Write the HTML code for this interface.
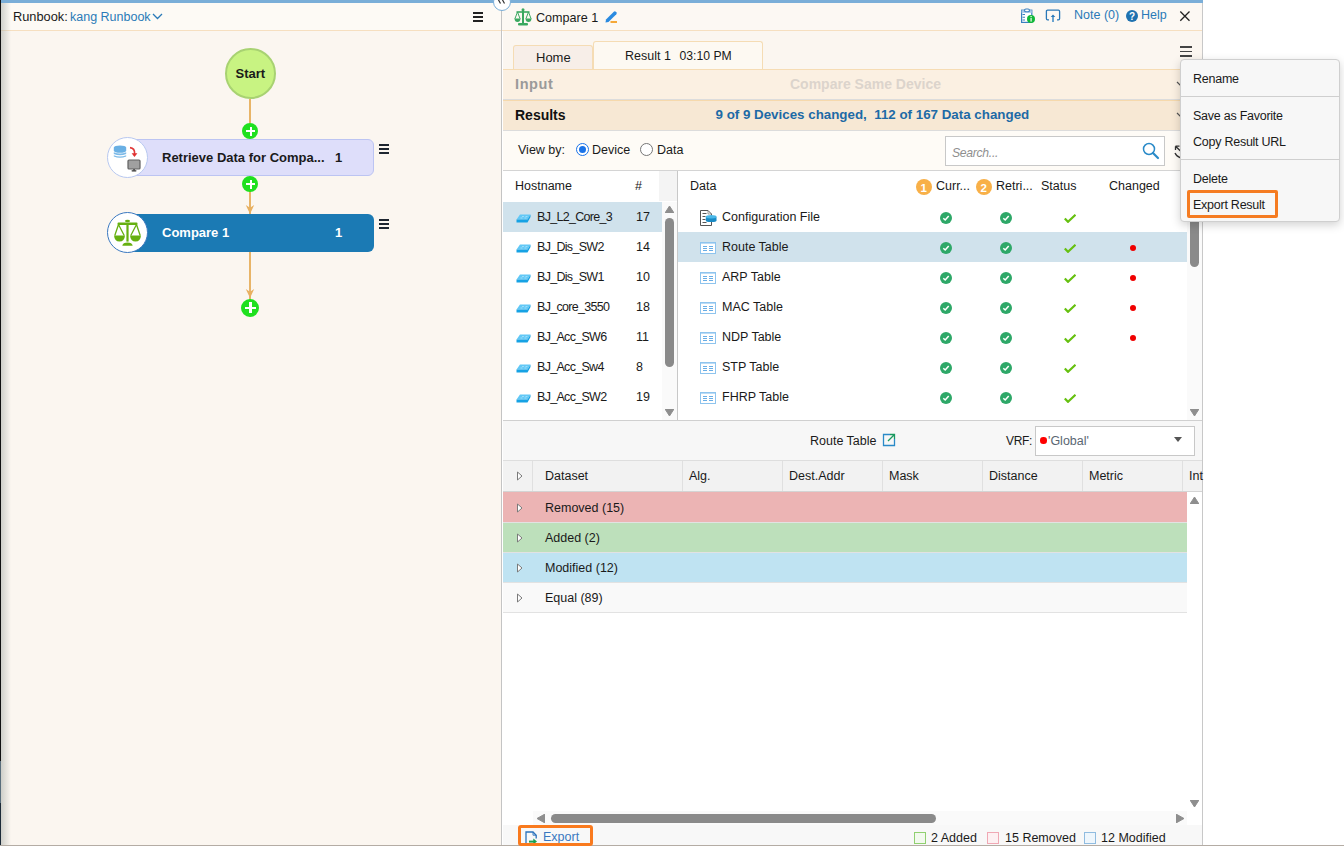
<!DOCTYPE html>
<html><head><meta charset="utf-8">
<style>
*{margin:0;padding:0;box-sizing:border-box}
html,body{width:1344px;height:846px;overflow:hidden;background:#fff}
body{position:relative;font-family:"Liberation Sans",sans-serif;font-size:12.5px;color:#1a1a1a}
.a{position:absolute}
.t{position:absolute;white-space:pre;line-height:1}
.b{font-weight:bold}
</style></head><body>

<!-- LEFT PANEL -->
<div class="a" style="left:0;top:0;width:501px;height:846px;background:#fbf6f0"></div>
<div class="a" style="left:0;top:3px;width:501px;height:27px;background:#fdfaf5"></div>
<div class="a" style="left:0;top:30px;width:501px;height:1px;background:#f6dfc0"></div>
<div class="a" style="left:1px;top:0;width:10px;height:846px;background:linear-gradient(to right,rgba(170,175,170,.55),rgba(250,246,240,0))"></div>
<div class="a" style="left:0;top:0;width:1px;height:846px;background:#111"></div>
<div class="a" style="left:0;top:761px;width:1px;height:42px;background:#5a6e7c"></div><div class="a" style="left:0;top:803px;width:1px;height:43px;background:#1c2a38"></div>
<div class="a" style="left:1px;top:0;width:1202px;height:3px;background:#7aaed8"></div>


<div class="t" style="left:13px;top:11px;font-size:12.8px">Runbook:</div><div class="t" style="left:70px;top:11px;color:#2a7ab8">kang Runbook</div>
<svg class="a" style="left:152px;top:13px" width="11" height="7" viewBox="0 0 11 7"><path d="M1 1 L5.5 5.5 L10 1" fill="none" stroke="#2a7ab8" stroke-width="1.3"/></svg>
<div class="a" style="left:473px;top:12px;width:10px;height:2px;background:#222"></div>
<div class="a" style="left:473px;top:16px;width:10px;height:2px;background:#222"></div>
<div class="a" style="left:473px;top:20px;width:10px;height:2px;background:#222"></div>

<!-- flow -->
<div class="a" style="left:249px;top:99px;width:2px;height:24px;background:#e8b468"></div>
<div class="a" style="left:249px;top:190px;width:2px;height:24px;background:#e8b468"></div>
<div class="a" style="left:249px;top:252px;width:2px;height:48px;background:#e8b468"></div>
<div class="a" style="left:225px;top:48px;width:51px;height:51px;border-radius:50%;background:#c8f382;border:2px solid #a8d272"></div>
<div class="t b" style="left:235.5px;top:67px;font-size:13px">Start</div>

<!-- retrieve node -->
<div class="a" style="left:120px;top:139px;width:254px;height:37px;background:#dedefa;border:1px solid #bcc4f2;border-radius:6px"></div>
<div class="a" style="left:107px;top:137px;width:41px;height:41px;border-radius:50%;background:#fff;border:1px solid #b8c8f0"></div>
<div class="t b" style="left:162px;top:151px;font-size:13px">Retrieve Data for Compa...</div>
<div class="t b" style="left:335px;top:151px;font-size:13px">1</div>
<div class="a" style="left:379px;top:144px;width:10px;height:2px;background:#1e2630"></div>
<div class="a" style="left:379px;top:148px;width:10px;height:2px;background:#1e2630"></div>
<div class="a" style="left:379px;top:152px;width:10px;height:2px;background:#1e2630"></div>

<!-- compare node -->
<div class="a" style="left:120px;top:214px;width:254px;height:38px;background:#1b7ab4;border-radius:6px"></div>
<div class="a" style="left:107px;top:212px;width:41px;height:41px;border-radius:50%;background:#fff;border:1px solid #3a78c0"></div>
<div class="t b" style="left:162px;top:226px;font-size:13px;color:#fff">Compare 1</div>
<div class="t b" style="left:335px;top:226px;font-size:13px;color:#fff">1</div>
<div class="a" style="left:379px;top:219px;width:10px;height:2px;background:#1e2630"></div>
<div class="a" style="left:379px;top:223px;width:10px;height:2px;background:#1e2630"></div>
<div class="a" style="left:379px;top:227px;width:10px;height:2px;background:#1e2630"></div>

<!-- plus circles -->
<div class="a" style="left:242px;top:123px;width:16px;height:16px;border-radius:50%;background:#1fe01f"></div>
<div class="a" style="left:242px;top:176px;width:16px;height:16px;border-radius:50%;background:#1fe01f"></div>
<div class="a" style="left:241px;top:299px;width:18px;height:18px;border-radius:50%;background:#1fe01f"></div>

<!-- DIVIDER -->
<div class="a" style="left:501px;top:3px;width:1px;height:843px;background:#c4c4c4"></div>

<!-- RIGHT PANEL -->
<div class="a" style="left:502px;top:3px;width:700px;height:27px;background:#fcf8f3"></div>
<div class="a" style="left:502px;top:30px;width:700px;height:1px;background:#f6dfc0"></div>
<div class="a" style="left:502px;top:31px;width:700px;height:38px;background:#fbf6f0"></div>
<div class="a" style="left:502px;top:69px;width:700px;height:1px;background:#f6dcb4"></div>
<div class="a" style="left:502px;top:70px;width:700px;height:29px;background:#fbf0e2"></div>
<div class="a" style="left:502px;top:99px;width:700px;height:1px;background:#dcdcdc"></div>
<div class="a" style="left:502px;top:100px;width:700px;height:30px;background:#f7e8d4"></div>
<div class="a" style="left:502px;top:100px;width:700px;height:1px;background:#f6d9ac"></div>
<div class="a" style="left:502px;top:130px;width:700px;height:1px;background:#dcdcdc"></div>
<div class="a" style="left:502px;top:131px;width:700px;height:39px;background:#fefbf6"></div>
<div class="a" style="left:502px;top:170px;width:700px;height:1px;background:#d4d4d4"></div>
<div class="a" style="left:502px;top:171px;width:700px;height:249px;background:#fff"></div>
<div class="a" style="left:502px;top:420px;width:700px;height:1px;background:#d0d0d0"></div>
<div class="a" style="left:502px;top:421px;width:700px;height:39px;background:#f7f7f7"></div>
<div class="a" style="left:502px;top:460px;width:700px;height:1px;background:#dedede"></div>
<div class="a" style="left:502px;top:461px;width:700px;height:30px;background:#f2f2f2"></div>
<div class="a" style="left:502px;top:491px;width:700px;height:1px;background:#d8d8d8"></div>
<div class="a" style="left:502px;top:492px;width:700px;height:333px;background:#fff"></div>
<div class="a" style="left:502px;top:825px;width:700px;height:20px;background:#f8f8f8"></div>
<div class="a" style="left:1202px;top:3px;width:1px;height:843px;background:#c8c8c8"></div>


<!-- right header content -->
<svg class="a" style="left:514px;top:8px" width="18" height="18" viewBox="0 0 18 18">
<g fill="#3aa860"><rect x="8" y="2" width="2" height="13"/><circle cx="9" cy="1.8" r="1.5"/><rect x="2.5" y="3.2" width="13" height="1.6"/><rect x="4" y="15" width="10" height="2.5" rx="1"/>
<path d="M.5 10.5 H6.5 Q6.3 14 3.5 14 Q.7 14 .5 10.5 Z"/><path d="M11.5 10.5 H17.5 Q17.3 14 14.5 14 Q11.7 14 11.5 10.5 Z"/></g>
<path d="M3.5 4 L.9 10.8 M3.5 4 L6.1 10.8 M14.5 4 L11.9 10.8 M14.5 4 L17.1 10.8" stroke="#3aa860" stroke-width="1" fill="none"/></svg>
<div class="t" style="left:536px;top:11.7px;font-size:12.6px">Compare 1</div>
<svg class="a" style="left:604px;top:10px" width="14" height="14" viewBox="0 0 14 14"><path d="M1.5 12.5 L2 9.5 L9.8 1.7 Q10.8 .8 11.8 1.7 L12.3 2.2 Q13.2 3.2 12.3 4.2 L4.5 12 Z" fill="#2a8ae0"/><rect x="6.5" y="11" width="6.5" height="2" fill="#f5a838"/></svg>

<svg class="a" style="left:1020px;top:8px" width="16" height="16" viewBox="0 0 16 16"><rect x="1.6" y="2.2" width="10.2" height="12.2" fill="#fff" stroke="#3a80c0" stroke-width="1.2"/><rect x="1.6" y="2.2" width="10.2" height="2.6" fill="#a8c8e8"/><rect x="4.6" y="1" width="4.8" height="2.8" rx="1.3" fill="#fff" stroke="#3a80c0" stroke-width="1.1"/><path d="M2.5 6.5h2.5M2.5 9.3h2.5M2.5 12h2.5" stroke="#3a80c0" stroke-width="1.1"/><circle cx="11" cy="11" r="4" fill="#10b838"/><rect x="10.4" y="10" width="1.4" height="3.6" fill="#d8f0d8"/><rect x="10.4" y="8" width="1.4" height="1.2" fill="#d8f0d8"/></svg><svg class="a" style="left:1045px;top:9px" width="16" height="14" viewBox="0 0 16 14"><path d="M4 10.8 H2.6 Q1.4 10.8 1.4 9.6 V2.4 Q1.4 1.2 2.6 1.2 H13.4 Q14.6 1.2 14.6 2.4 V9.6 Q14.6 10.8 13.4 10.8 H12" fill="none" stroke="#2a78b8" stroke-width="1.3"/><path d="M8 13 V6.5" stroke="#3a88c4" stroke-width="1.5"/><path d="M5.7 8 L8 5.5 L10.3 8 Z" fill="#2a78b8"/></svg>
<div class="t" style="left:1074px;top:9px;color:#2a7ab8;font-size:12.5px">Note (0)</div>
<div class="a" style="left:1126px;top:10px;width:12px;height:12px;border-radius:50%;background:#1f72b0"></div>
<div class="t b" style="left:1129px;top:11.5px;color:#fff;font-size:10px">?</div>
<div class="t" style="left:1141px;top:9px;color:#2a7ab8;font-size:12.5px">Help</div>
<svg class="a" style="left:1179px;top:10px" width="12" height="12" viewBox="0 0 12 12"><path d="M1.3 1.5 L10.5 10.7 M10.5 1.5 L1.3 10.7" stroke="#222" stroke-width="1.3"/></svg>

<!-- tabs -->
<div class="a" style="left:513px;top:45px;width:80px;height:24px;background:#f7eee8;border:1px solid #f5dcb4;border-bottom:none;border-radius:3px 3px 0 0"></div>
<div class="t" style="left:536px;top:51px;font-size:13px">Home</div>
<div class="a" style="left:593px;top:41px;width:170px;height:28px;background:#fdf9f2;border:1px solid #f5dcb4;border-bottom:none;border-radius:3px 3px 0 0"></div>
<div class="t" style="left:625px;top:50px">Result 1</div><div class="t" style="left:679.5px;top:50px;font-size:12.2px">03:10 PM</div>
<div class="a" style="left:1180px;top:46px;width:12px;height:1.5px;background:#444"></div>
<div class="a" style="left:1180px;top:50.5px;width:12px;height:1.5px;background:#444"></div>
<div class="a" style="left:1180px;top:55px;width:12px;height:1.5px;background:#444"></div>

<!-- input / results rows -->
<div class="t b" style="left:515px;top:77px;font-size:14.5px;letter-spacing:.6px;color:#9a9a9a">Input</div>
<div class="t b" style="left:790px;top:77px;font-size:14px;color:#dcd4cc">Compare Same Device</div>
<div class="t b" style="left:515px;top:108px;font-size:14px;color:#111">Results</div>
<div class="t b" style="left:715.5px;top:108.3px;font-size:13.35px;color:#1d6aa6">9 of 9 Devices changed,  112 of 167 Data changed</div>

<!-- view by -->
<div class="t" style="left:518px;top:144px">View by:</div>
<div class="a" style="left:576px;top:143px;width:13px;height:13px;border-radius:50%;border:1px solid #1a73e8;background:#fff"></div>
<div class="a" style="left:579px;top:146px;width:7px;height:7px;border-radius:50%;background:#1a73e8"></div>
<div class="t" style="left:592px;top:144px">Device</div>
<div class="a" style="left:640px;top:143px;width:13px;height:13px;border-radius:50%;border:1px solid #767676;background:#fff"></div>
<div class="t" style="left:657px;top:144px">Data</div>
<div class="a" style="left:945px;top:136px;width:220px;height:30px;background:#fff;border:1px solid #c8c8c8"></div>
<div class="t" style="left:952px;top:146.5px;color:#8f8f8f;font-style:italic;font-size:12.2px;letter-spacing:-.3px">Search...</div>
<svg class="a" style="left:1142px;top:142px" width="18" height="18" viewBox="0 0 18 18"><circle cx="7" cy="7" r="5.5" fill="none" stroke="#2a8ac8" stroke-width="1.5"/><path d="M11 11 L16 16" stroke="#2a8ac8" stroke-width="2.2" stroke-linecap="round"/></svg>

<div class="a" style="left:659px;top:171px;width:18px;height:30px;background:#f4f4f4"></div>
<div class="a" style="left:662px;top:202px;width:15px;height:218px;background:#fafafa"></div>
<div class="a" style="left:677px;top:171px;width:1px;height:249px;background:#c8c8c8"></div>
<div class="t" style="left:515px;top:180.3px">Hostname</div>
<div class="t" style="left:635px;top:180.3px">#</div>
<div class="a" style="left:503px;top:202px;width:159px;height:30px;background:#d0e2ec"></div>
<svg class="a" style="left:515.5px;top:213.5px" width="15" height="10" viewBox="0 0 15 10"><path d="M4 .5 H14.5 L11.5 5.5 H.5 Z" fill="#62c8f6"/><path d="M.5 5.5 H11.5 L14.5 .5 V3 L11.5 8.5 H.5 Z" fill="#16a2e4"/><path d="M6 2.5 h2 M9.5 2.5 h2 M4.5 4 h2 M8.5 4 h2" stroke="#a8e2fb" stroke-width=".8"/></svg>
<div class="t" style="left:537px;top:211px;letter-spacing:-.7px">BJ_L2_Core_3</div>
<div class="t" style="left:636px;top:211px">17</div>
<svg class="a" style="left:515.5px;top:243.5px" width="15" height="10" viewBox="0 0 15 10"><path d="M4 .5 H14.5 L11.5 5.5 H.5 Z" fill="#62c8f6"/><path d="M.5 5.5 H11.5 L14.5 .5 V3 L11.5 8.5 H.5 Z" fill="#16a2e4"/><path d="M6 2.5 h2 M9.5 2.5 h2 M4.5 4 h2 M8.5 4 h2" stroke="#a8e2fb" stroke-width=".8"/></svg>
<div class="t" style="left:537px;top:241px;letter-spacing:-.7px">BJ_Dis_SW2</div>
<div class="t" style="left:636px;top:241px">14</div>
<svg class="a" style="left:515.5px;top:273.5px" width="15" height="10" viewBox="0 0 15 10"><path d="M4 .5 H14.5 L11.5 5.5 H.5 Z" fill="#62c8f6"/><path d="M.5 5.5 H11.5 L14.5 .5 V3 L11.5 8.5 H.5 Z" fill="#16a2e4"/><path d="M6 2.5 h2 M9.5 2.5 h2 M4.5 4 h2 M8.5 4 h2" stroke="#a8e2fb" stroke-width=".8"/></svg>
<div class="t" style="left:537px;top:271px;letter-spacing:-.7px">BJ_Dis_SW1</div>
<div class="t" style="left:636px;top:271px">10</div>
<svg class="a" style="left:515.5px;top:303.5px" width="15" height="10" viewBox="0 0 15 10"><path d="M4 .5 H14.5 L11.5 5.5 H.5 Z" fill="#62c8f6"/><path d="M.5 5.5 H11.5 L14.5 .5 V3 L11.5 8.5 H.5 Z" fill="#16a2e4"/><path d="M6 2.5 h2 M9.5 2.5 h2 M4.5 4 h2 M8.5 4 h2" stroke="#a8e2fb" stroke-width=".8"/></svg>
<div class="t" style="left:537px;top:301px;letter-spacing:-.7px">BJ_core_3550</div>
<div class="t" style="left:636px;top:301px">18</div>
<svg class="a" style="left:515.5px;top:333.5px" width="15" height="10" viewBox="0 0 15 10"><path d="M4 .5 H14.5 L11.5 5.5 H.5 Z" fill="#62c8f6"/><path d="M.5 5.5 H11.5 L14.5 .5 V3 L11.5 8.5 H.5 Z" fill="#16a2e4"/><path d="M6 2.5 h2 M9.5 2.5 h2 M4.5 4 h2 M8.5 4 h2" stroke="#a8e2fb" stroke-width=".8"/></svg>
<div class="t" style="left:537px;top:331px;letter-spacing:-.7px">BJ_Acc_SW6</div>
<div class="t" style="left:636px;top:331px">11</div>
<svg class="a" style="left:515.5px;top:363.5px" width="15" height="10" viewBox="0 0 15 10"><path d="M4 .5 H14.5 L11.5 5.5 H.5 Z" fill="#62c8f6"/><path d="M.5 5.5 H11.5 L14.5 .5 V3 L11.5 8.5 H.5 Z" fill="#16a2e4"/><path d="M6 2.5 h2 M9.5 2.5 h2 M4.5 4 h2 M8.5 4 h2" stroke="#a8e2fb" stroke-width=".8"/></svg>
<div class="t" style="left:537px;top:361px;letter-spacing:-.7px">BJ_Acc_Sw4</div>
<div class="t" style="left:636px;top:361px">8</div>
<svg class="a" style="left:515.5px;top:393.5px" width="15" height="10" viewBox="0 0 15 10"><path d="M4 .5 H14.5 L11.5 5.5 H.5 Z" fill="#62c8f6"/><path d="M.5 5.5 H11.5 L14.5 .5 V3 L11.5 8.5 H.5 Z" fill="#16a2e4"/><path d="M6 2.5 h2 M9.5 2.5 h2 M4.5 4 h2 M8.5 4 h2" stroke="#a8e2fb" stroke-width=".8"/></svg>
<div class="t" style="left:537px;top:391px;letter-spacing:-.7px">BJ_Acc_SW2</div>
<div class="t" style="left:636px;top:391px">19</div>
<svg class="a" style="left:665px;top:206px" width="9" height="7" viewBox="0 0 9 7"><path d="M4.5 0 L9 7 H0 Z" fill="#8e8e8e" stroke="#8e8e8e" stroke-width="1" stroke-linejoin="round"/></svg>
<div class="a" style="left:665px;top:218px;width:9px;height:149px;background:#8a8a8a;border-radius:4.5px"></div>
<svg class="a" style="left:665px;top:409px" width="9" height="7" viewBox="0 0 9 7"><path d="M0 0 H9 L4.5 7 Z" fill="#8e8e8e" stroke="#8e8e8e" stroke-width="1" stroke-linejoin="round"/></svg>
<div class="t" style="left:690px;top:180.3px">Data</div>
<div class="a" style="left:916px;top:179px;width:16px;height:16px;border-radius:50%;background:#f8b048"></div>
<div class="t b" style="left:920.5px;top:182.5px;color:#fff;font-size:11.5px">1</div>
<div class="t" style="left:936px;top:180.3px">Curr...</div>
<div class="a" style="left:976px;top:179px;width:16px;height:16px;border-radius:50%;background:#f8b048"></div>
<div class="t b" style="left:980.5px;top:182.5px;color:#fff;font-size:11.5px">2</div>
<div class="t" style="left:996px;top:180.3px">Retri...</div>
<div class="t" style="left:1041px;top:180.3px">Status</div>
<div class="t" style="left:1109px;top:180.3px">Changed</div>
<svg class="a" style="left:700px;top:210px" width="17" height="17" viewBox="0 0 17 17"><path d="M.5 .5 H8 L11.5 4 V15.5 H.5 Z" fill="#fff" stroke="#555" stroke-width="1"/><path d="M8 .5 V4 H11.5" fill="none" stroke="#777" stroke-width=".7"/><path d="M2.5 3.5h4M2.5 6.5h3M2.5 9.5h3M2.5 12.5h4" stroke="#555" stroke-width="1"/><rect x="5.8" y="6.8" width="10.7" height="3.6" fill="#1a90cc"/><ellipse cx="11.15" cy="10.4" rx="5.35" ry="1.7" fill="#1a8ac4"/><ellipse cx="11.15" cy="6.8" rx="5.35" ry="1.7" fill="#4ab8e8"/></svg>
<div class="t" style="left:722px;top:211px">Configuration File</div>
<svg class="a" style="left:940px;top:212px" width="12" height="12" viewBox="0 0 12 12"><circle cx="6" cy="6" r="6" fill="#2ea868"/><path d="M3.3 6.2 L5.2 8 L8.7 4" fill="none" stroke="#fff" stroke-width="1.5"/></svg>
<svg class="a" style="left:1000px;top:212px" width="12" height="12" viewBox="0 0 12 12"><circle cx="6" cy="6" r="6" fill="#2ea868"/><path d="M3.3 6.2 L5.2 8 L8.7 4" fill="none" stroke="#fff" stroke-width="1.5"/></svg>
<svg class="a" style="left:1064px;top:214px" width="12" height="9" viewBox="0 0 12 9"><path d="M0.8 4.5 L4 7.8 L11.5 0.8" fill="none" stroke="#66c010" stroke-width="2.2"/></svg>
<div class="a" style="left:678px;top:232px;width:509px;height:30px;background:#d0e2ec"></div>
<svg class="a" style="left:700px;top:242px" width="16" height="12" viewBox="0 0 16 12"><rect x=".5" y=".5" width="15" height="11" fill="#fff" stroke="#8ec4ee"/><rect x="0" y="0" width="16" height="1.6" fill="#8ec4ee"/><path d="M3 4.5h4M3 6.5h4M3 8.5h4M9 4.5h4M9 6.5h4M9 8.5h4" stroke="#6aaee6" stroke-width="1"/></svg>
<div class="t" style="left:722px;top:241px">Route Table</div>
<svg class="a" style="left:940px;top:242px" width="12" height="12" viewBox="0 0 12 12"><circle cx="6" cy="6" r="6" fill="#2ea868"/><path d="M3.3 6.2 L5.2 8 L8.7 4" fill="none" stroke="#fff" stroke-width="1.5"/></svg>
<svg class="a" style="left:1000px;top:242px" width="12" height="12" viewBox="0 0 12 12"><circle cx="6" cy="6" r="6" fill="#2ea868"/><path d="M3.3 6.2 L5.2 8 L8.7 4" fill="none" stroke="#fff" stroke-width="1.5"/></svg>
<svg class="a" style="left:1064px;top:244px" width="12" height="9" viewBox="0 0 12 9"><path d="M0.8 4.5 L4 7.8 L11.5 0.8" fill="none" stroke="#66c010" stroke-width="2.2"/></svg>
<div class="a" style="left:1130px;top:245px;width:6px;height:6px;border-radius:50%;background:#f00000"></div>
<svg class="a" style="left:700px;top:272px" width="16" height="12" viewBox="0 0 16 12"><rect x=".5" y=".5" width="15" height="11" fill="#fff" stroke="#8ec4ee"/><rect x="0" y="0" width="16" height="1.6" fill="#8ec4ee"/><path d="M3 4.5h4M3 6.5h4M3 8.5h4M9 4.5h4M9 6.5h4M9 8.5h4" stroke="#6aaee6" stroke-width="1"/></svg>
<div class="t" style="left:722px;top:271px">ARP Table</div>
<svg class="a" style="left:940px;top:272px" width="12" height="12" viewBox="0 0 12 12"><circle cx="6" cy="6" r="6" fill="#2ea868"/><path d="M3.3 6.2 L5.2 8 L8.7 4" fill="none" stroke="#fff" stroke-width="1.5"/></svg>
<svg class="a" style="left:1000px;top:272px" width="12" height="12" viewBox="0 0 12 12"><circle cx="6" cy="6" r="6" fill="#2ea868"/><path d="M3.3 6.2 L5.2 8 L8.7 4" fill="none" stroke="#fff" stroke-width="1.5"/></svg>
<svg class="a" style="left:1064px;top:274px" width="12" height="9" viewBox="0 0 12 9"><path d="M0.8 4.5 L4 7.8 L11.5 0.8" fill="none" stroke="#66c010" stroke-width="2.2"/></svg>
<div class="a" style="left:1130px;top:275px;width:6px;height:6px;border-radius:50%;background:#f00000"></div>
<svg class="a" style="left:700px;top:302px" width="16" height="12" viewBox="0 0 16 12"><rect x=".5" y=".5" width="15" height="11" fill="#fff" stroke="#8ec4ee"/><rect x="0" y="0" width="16" height="1.6" fill="#8ec4ee"/><path d="M3 4.5h4M3 6.5h4M3 8.5h4M9 4.5h4M9 6.5h4M9 8.5h4" stroke="#6aaee6" stroke-width="1"/></svg>
<div class="t" style="left:722px;top:301px">MAC Table</div>
<svg class="a" style="left:940px;top:302px" width="12" height="12" viewBox="0 0 12 12"><circle cx="6" cy="6" r="6" fill="#2ea868"/><path d="M3.3 6.2 L5.2 8 L8.7 4" fill="none" stroke="#fff" stroke-width="1.5"/></svg>
<svg class="a" style="left:1000px;top:302px" width="12" height="12" viewBox="0 0 12 12"><circle cx="6" cy="6" r="6" fill="#2ea868"/><path d="M3.3 6.2 L5.2 8 L8.7 4" fill="none" stroke="#fff" stroke-width="1.5"/></svg>
<svg class="a" style="left:1064px;top:304px" width="12" height="9" viewBox="0 0 12 9"><path d="M0.8 4.5 L4 7.8 L11.5 0.8" fill="none" stroke="#66c010" stroke-width="2.2"/></svg>
<div class="a" style="left:1130px;top:305px;width:6px;height:6px;border-radius:50%;background:#f00000"></div>
<svg class="a" style="left:700px;top:332px" width="16" height="12" viewBox="0 0 16 12"><rect x=".5" y=".5" width="15" height="11" fill="#fff" stroke="#8ec4ee"/><rect x="0" y="0" width="16" height="1.6" fill="#8ec4ee"/><path d="M3 4.5h4M3 6.5h4M3 8.5h4M9 4.5h4M9 6.5h4M9 8.5h4" stroke="#6aaee6" stroke-width="1"/></svg>
<div class="t" style="left:722px;top:331px">NDP Table</div>
<svg class="a" style="left:940px;top:332px" width="12" height="12" viewBox="0 0 12 12"><circle cx="6" cy="6" r="6" fill="#2ea868"/><path d="M3.3 6.2 L5.2 8 L8.7 4" fill="none" stroke="#fff" stroke-width="1.5"/></svg>
<svg class="a" style="left:1000px;top:332px" width="12" height="12" viewBox="0 0 12 12"><circle cx="6" cy="6" r="6" fill="#2ea868"/><path d="M3.3 6.2 L5.2 8 L8.7 4" fill="none" stroke="#fff" stroke-width="1.5"/></svg>
<svg class="a" style="left:1064px;top:334px" width="12" height="9" viewBox="0 0 12 9"><path d="M0.8 4.5 L4 7.8 L11.5 0.8" fill="none" stroke="#66c010" stroke-width="2.2"/></svg>
<div class="a" style="left:1130px;top:335px;width:6px;height:6px;border-radius:50%;background:#f00000"></div>
<svg class="a" style="left:700px;top:362px" width="16" height="12" viewBox="0 0 16 12"><rect x=".5" y=".5" width="15" height="11" fill="#fff" stroke="#8ec4ee"/><rect x="0" y="0" width="16" height="1.6" fill="#8ec4ee"/><path d="M3 4.5h4M3 6.5h4M3 8.5h4M9 4.5h4M9 6.5h4M9 8.5h4" stroke="#6aaee6" stroke-width="1"/></svg>
<div class="t" style="left:722px;top:361px">STP Table</div>
<svg class="a" style="left:940px;top:362px" width="12" height="12" viewBox="0 0 12 12"><circle cx="6" cy="6" r="6" fill="#2ea868"/><path d="M3.3 6.2 L5.2 8 L8.7 4" fill="none" stroke="#fff" stroke-width="1.5"/></svg>
<svg class="a" style="left:1000px;top:362px" width="12" height="12" viewBox="0 0 12 12"><circle cx="6" cy="6" r="6" fill="#2ea868"/><path d="M3.3 6.2 L5.2 8 L8.7 4" fill="none" stroke="#fff" stroke-width="1.5"/></svg>
<svg class="a" style="left:1064px;top:364px" width="12" height="9" viewBox="0 0 12 9"><path d="M0.8 4.5 L4 7.8 L11.5 0.8" fill="none" stroke="#66c010" stroke-width="2.2"/></svg>
<svg class="a" style="left:700px;top:392px" width="16" height="12" viewBox="0 0 16 12"><rect x=".5" y=".5" width="15" height="11" fill="#fff" stroke="#8ec4ee"/><rect x="0" y="0" width="16" height="1.6" fill="#8ec4ee"/><path d="M3 4.5h4M3 6.5h4M3 8.5h4M9 4.5h4M9 6.5h4M9 8.5h4" stroke="#6aaee6" stroke-width="1"/></svg>
<div class="t" style="left:722px;top:391px">FHRP Table</div>
<svg class="a" style="left:940px;top:392px" width="12" height="12" viewBox="0 0 12 12"><circle cx="6" cy="6" r="6" fill="#2ea868"/><path d="M3.3 6.2 L5.2 8 L8.7 4" fill="none" stroke="#fff" stroke-width="1.5"/></svg>
<svg class="a" style="left:1000px;top:392px" width="12" height="12" viewBox="0 0 12 12"><circle cx="6" cy="6" r="6" fill="#2ea868"/><path d="M3.3 6.2 L5.2 8 L8.7 4" fill="none" stroke="#fff" stroke-width="1.5"/></svg>
<svg class="a" style="left:1064px;top:394px" width="12" height="9" viewBox="0 0 12 9"><path d="M0.8 4.5 L4 7.8 L11.5 0.8" fill="none" stroke="#66c010" stroke-width="2.2"/></svg>
<div class="a" style="left:1187px;top:171px;width:15px;height:249px;background:#fafafa"></div>
<div class="a" style="left:1190px;top:180px;width:9px;height:87px;background:#8a8a8a;border-radius:4.5px"></div>
<svg class="a" style="left:1190px;top:409px" width="9" height="7" viewBox="0 0 9 7"><path d="M0 0 H9 L4.5 7 Z" fill="#8e8e8e" stroke="#8e8e8e" stroke-width="1" stroke-linejoin="round"/></svg>
<div class="t" style="left:810px;top:434.5px">Route Table</div>
<svg class="a" style="left:882px;top:433px" width="14" height="14" viewBox="0 0 14 14"><path d="M8 1.5 H1.5 V12.5 H12.5 V6" fill="none" stroke="#2a8ac8" stroke-width="1.3"/><path d="M6 8 L12.5 1.5 M8 1.5 H12.5 V6" fill="none" stroke="#1a9a60" stroke-width="1.3"/></svg>
<div class="t" style="left:1006px;top:434.5px;font-size:12px;letter-spacing:-.3px">VRF:</div>
<div class="a" style="left:1035px;top:426px;width:160px;height:30px;background:#fff;border:1px solid #c8c8c8"></div>
<div class="a" style="left:1040px;top:437px;width:6.5px;height:6.5px;border-radius:50%;background:#f00"></div>
<div class="t" style="left:1048px;top:434.5px;color:#5a6672">'Global'</div>
<svg class="a" style="left:1174px;top:437px" width="8" height="5" viewBox="0 0 8 5"><path d="M0 0 H8 L4 5 Z" fill="#555"/></svg>
<div class="a" style="left:532px;top:461px;width:1px;height:30px;background:#e0e0e0"></div>
<div class="a" style="left:682px;top:461px;width:1px;height:30px;background:#e0e0e0"></div>
<div class="a" style="left:782px;top:461px;width:1px;height:30px;background:#e0e0e0"></div>
<div class="a" style="left:882px;top:461px;width:1px;height:30px;background:#e0e0e0"></div>
<div class="a" style="left:982px;top:461px;width:1px;height:30px;background:#e0e0e0"></div>
<div class="a" style="left:1082px;top:461px;width:1px;height:30px;background:#e0e0e0"></div>
<div class="a" style="left:1182px;top:461px;width:1px;height:30px;background:#e0e0e0"></div>
<svg class="a" style="left:516px;top:471px" width="7" height="10" viewBox="0 0 7 10"><path d="M1.5 1 L6 5 L1.5 9 Z" fill="#fff" stroke="#7a7a7a" stroke-width="1"/></svg>
<div class="t" style="left:545px;top:469.5px">Dataset</div>
<div class="t" style="left:689px;top:469.5px">Alg.</div>
<div class="t" style="left:789px;top:469.5px">Dest.Addr</div>
<div class="t" style="left:889px;top:469.5px">Mask</div>
<div class="t" style="left:989px;top:469.5px">Distance</div>
<div class="t" style="left:1089px;top:469.5px">Metric</div>
<div class="t" style="left:1189px;top:469.5px">Int</div>
<div class="a" style="left:502px;top:491px;width:700px;height:1px;background:#d4d4d4"></div>
<div class="a" style="left:503px;top:492px;width:684px;height:30px;background:#ecb4b4"></div><div class="a" style="left:503px;top:522px;width:684px;height:1px;background:#e2e2e2"></div>
<svg class="a" style="left:516px;top:503px" width="7" height="10" viewBox="0 0 7 10"><path d="M1.5 1 L6 5 L1.5 9 Z" fill="#fff" stroke="#7a7a7a" stroke-width="1"/></svg>
<div class="t" style="left:545px;top:502px">Removed (15)</div>
<div class="a" style="left:503px;top:523px;width:684px;height:29px;background:#bde0bb"></div><div class="a" style="left:503px;top:552px;width:684px;height:1px;background:#e2e2e2"></div>
<svg class="a" style="left:516px;top:533px" width="7" height="10" viewBox="0 0 7 10"><path d="M1.5 1 L6 5 L1.5 9 Z" fill="#fff" stroke="#7a7a7a" stroke-width="1"/></svg>
<div class="t" style="left:545px;top:532px">Added (2)</div>
<div class="a" style="left:503px;top:553px;width:684px;height:29px;background:#bfe3f2"></div><div class="a" style="left:503px;top:582px;width:684px;height:1px;background:#e2e2e2"></div>
<svg class="a" style="left:516px;top:563px" width="7" height="10" viewBox="0 0 7 10"><path d="M1.5 1 L6 5 L1.5 9 Z" fill="#fff" stroke="#7a7a7a" stroke-width="1"/></svg>
<div class="t" style="left:545px;top:562px">Modified (12)</div>
<div class="a" style="left:503px;top:583px;width:684px;height:29px;background:#f9f9f9"></div><div class="a" style="left:503px;top:612px;width:684px;height:1px;background:#e2e2e2"></div>
<svg class="a" style="left:516px;top:593px" width="7" height="10" viewBox="0 0 7 10"><path d="M1.5 1 L6 5 L1.5 9 Z" fill="#fff" stroke="#7a7a7a" stroke-width="1"/></svg>
<div class="t" style="left:545px;top:592px">Equal (89)</div>

<svg class="a" style="left:1190px;top:497px" width="9" height="7" viewBox="0 0 9 7"><path d="M4.5 0 L9 7 H0 Z" fill="#8e8e8e" stroke="#8e8e8e" stroke-width="1" stroke-linejoin="round"/></svg>
<svg class="a" style="left:1190px;top:800px" width="9" height="7" viewBox="0 0 9 7"><path d="M0 0 H9 L4.5 7 Z" fill="#8e8e8e" stroke="#8e8e8e" stroke-width="1" stroke-linejoin="round"/></svg>
<div class="a" style="left:533px;top:811px;width:654px;height:14px;background:#fafafa"></div>
<svg class="a" style="left:537px;top:814px" width="8" height="9" viewBox="0 0 8 9"><path d="M0 4.5 L8 0 V9 Z" fill="#8e8e8e" stroke="#8e8e8e" stroke-width="1" stroke-linejoin="round"/></svg>
<div class="a" style="left:551px;top:814px;width:385px;height:9px;background:#8a8a8a;border-radius:4.5px"></div>
<svg class="a" style="left:1176px;top:814px" width="8" height="9" viewBox="0 0 8 9"><path d="M8 4.5 L0 0 V9 Z" fill="#8e8e8e" stroke="#8e8e8e" stroke-width="1" stroke-linejoin="round"/></svg>
<svg class="a" style="left:525px;top:831px" width="13" height="14" viewBox="0 0 13 14"><path d="M1 12.5 V1 H8 L11.2 4.2 V7.5" fill="none" stroke="#2a72bc" stroke-width="1.3"/><path d="M8 1 V4.2 H11.2" fill="none" stroke="#2a72bc" stroke-width=".9"/><path d="M1 12.6 H5" stroke="#777" stroke-width="1"/><path d="M4 10.6 H9" stroke="#1aa050" stroke-width="2"/><path d="M8.3 7.6 L12 10.6 L8.3 13.6 Z" fill="#1aa050"/></svg>
<div class="t" style="left:543px;top:830.5px;color:#3a78c0">Export</div>

<div class="a" style="left:914px;top:832px;width:12px;height:12px;border:1px solid #90d070;background:#f2f9ee"></div>
<div class="t" style="left:931px;top:832px">2 Added</div>
<div class="a" style="left:987px;top:832px;width:12px;height:12px;border:1px solid #f0a8b4;background:#fdf0f2"></div>
<div class="t" style="left:1005px;top:832px">15 Removed</div>
<div class="a" style="left:1084px;top:832px;width:12px;height:12px;border:1px solid #90bce0;background:#eef6fc"></div>
<div class="t" style="left:1101px;top:832px">12 Modified</div>
<div class="a" style="left:493px;top:-7.5px;width:18px;height:18px;border-radius:50%;background:#fff;border:1px solid #7aaed8"></div>
<svg class="a" style="left:497px;top:0" width="10" height="5" viewBox="0 0 10 5"><path d="M1 -1 L3.5 3.5 M5 -1 L7.5 3.5" stroke="#333" stroke-width="1.2"/></svg>
<div class="a" style="left:502px;top:31px;width:1px;height:814px;background:#fff"></div>
<svg class="a" style="left:245px;top:205px" width="10" height="9" viewBox="0 0 10 9"><path d="M0.8 0 L5 2.8 L9.2 0 L5 9 Z" fill="#e8b060"/></svg>
<svg class="a" style="left:245px;top:289px" width="10" height="9" viewBox="0 0 10 9"><path d="M0.8 0 L5 2.8 L9.2 0 L5 9 Z" fill="#e8b060"/></svg>
<div class="a" style="left:246px;top:130px;width:9px;height:2px;background:#fff"></div>
<div class="a" style="left:249.5px;top:126.5px;width:2px;height:9px;background:#fff"></div>
<div class="a" style="left:246px;top:183px;width:9px;height:2px;background:#fff"></div>
<div class="a" style="left:249.5px;top:179.5px;width:2px;height:9px;background:#fff"></div>
<div class="a" style="left:245px;top:306.5px;width:11px;height:2.6px;background:#fff"></div>
<div class="a" style="left:249.2px;top:302px;width:2.6px;height:11px;background:#fff"></div>
<svg class="a" style="left:113px;top:145px" width="28" height="27" viewBox="0 0 28 27">
<g fill="#6ab0e4"><ellipse cx="7" cy="2.8" rx="6.2" ry="2.4"/><rect x=".8" y="2.8" width="12.4" height="3"/><ellipse cx="7" cy="5.8" rx="6.2" ry="2" /></g>
<g fill="#7cbae8"><path d="M.8 7.2 Q7 10 13.2 7.2 V9 Q7 11.6 .8 9 Z"/><path d="M.8 10.2 Q7 13 13.2 10.2 V11.5 Q7 14.2 .8 11.5 Z"/></g>
<path d="M17 2.6 Q22 3 21.6 9" fill="none" stroke="#e03838" stroke-width="1.6"/><path d="M18.6 8.2 H24.4 L21.5 12 Z" fill="#e03030"/>
<rect x="15" y="15" width="12" height="9" rx="1" fill="#a0a0a0" stroke="#606060" stroke-width="1.2"/><rect x="20.3" y="24" width="1.5" height="1.6" fill="#444"/><rect x="18.5" y="25.2" width="5" height="1.2" rx=".6" fill="#333"/>
</svg>
<svg class="a" style="left:113px;top:219px" width="29" height="28" viewBox="0 0 29 28">
<g fill="#66b010"><ellipse cx="14.5" cy="2" rx="2.5" ry="1.2"/><rect x="4.5" y="3.6" width="20" height="2.4" rx="1"/><rect x="13.4" y="5" width="2.2" height="17.6"/>
<path d="M1 16.5 H12 Q11.5 22.5 6.5 22.5 Q1.5 22.5 1 16.5 Z"/><path d="M17 16.5 H28 Q27.5 22.5 22.5 22.5 Q17.5 22.5 17 16.5 Z"/>
<path d="M9.3 26.8 Q10 23.6 14.5 23.6 Q19 23.6 19.7 26.8 Z"/></g>
<path d="M5.5 5.5 L1.8 16.5 M5.5 5.5 L11.2 16.5 M23.5 5.5 L17.8 16.5 M23.5 5.5 L27.2 16.5" stroke="#66b010" stroke-width="1.3" fill="none"/>
</svg>
<svg class="a" style="left:1176px;top:81px" width="10" height="6" viewBox="0 0 10 6"><path d="M1 1 L5 5 L9 1" fill="none" stroke="#555" stroke-width="1.2"/></svg>
<svg class="a" style="left:1176px;top:112px" width="10" height="6" viewBox="0 0 10 6"><path d="M1 1 L5 5 L9 1" fill="none" stroke="#555" stroke-width="1.2"/></svg>
<svg class="a" style="left:1172px;top:143px" width="14" height="16" viewBox="0 0 14 16"><path d="M3.5 3.2 L8.5 8 M3.5 3.2 V7 M3.5 3.2 H7.5" fill="none" stroke="#333" stroke-width="1.3"/><path d="M3 10 Q4.5 13.5 8.5 14.8" fill="none" stroke="#333" stroke-width="1.3"/></svg>
<div class="a" style="left:1180px;top:59px;width:160px;height:163px;background:#f7f7f7;border:1px solid #cfcfcf;border-radius:4px;box-shadow:0 3px 10px rgba(0,0,0,.18)"></div>
<div class="a" style="left:1181px;top:96px;width:158px;height:1px;background:#cfcfcf"></div>
<div class="a" style="left:1181px;top:159px;width:158px;height:1px;background:#cfcfcf"></div>
<div class="t" style="left:1193px;top:72.5px;letter-spacing:-.25px">Rename</div>
<div class="t" style="left:1193px;top:109.5px;letter-spacing:-.25px">Save as Favorite</div>
<div class="t" style="left:1193px;top:135.5px;letter-spacing:-.25px">Copy Result URL</div>
<div class="t" style="left:1193px;top:172.5px;letter-spacing:-.25px">Delete</div>
<div class="t" style="left:1193px;top:198.5px;letter-spacing:-.25px">Export Result</div>
<div class="a" style="left:1187px;top:190px;width:91px;height:28px;border:3px solid #f57c22;border-radius:2px"></div>
<div class="a" style="left:0;top:845px;width:1344px;height:1px;background:#b4aca4"></div>
<div class="a" style="left:518px;top:825px;width:75px;height:21px;border:3px solid #f97a1e;border-radius:3px"></div>
</body></html>
